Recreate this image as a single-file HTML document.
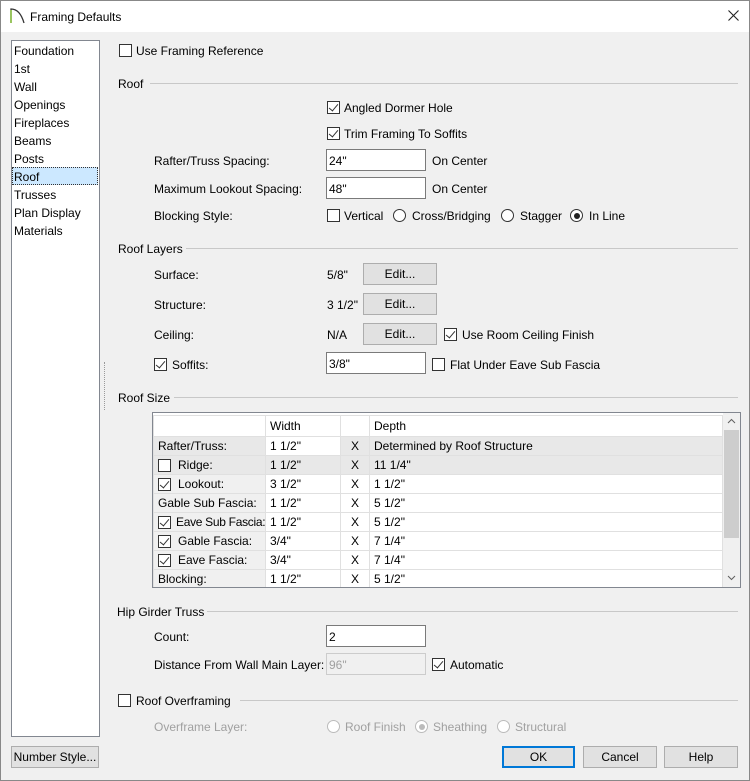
<!DOCTYPE html>
<html><head><style>
*{margin:0;padding:0;box-sizing:border-box}
body{width:750px;height:781px;background:#f0f0f0;font:12px "Liberation Sans",sans-serif;color:#000;position:relative;overflow:hidden}
.a{position:absolute;white-space:nowrap;line-height:16px;margin-top:1px}
.cb{position:absolute;width:13px;height:13px;border:1px solid #333;background:#fff}
.cb.on::after{content:"";position:absolute;left:3px;top:0px;width:4px;height:8px;border:solid #333;border-width:0 1.5px 1.5px 0;transform:rotate(40deg)}
.rd{position:absolute;width:13px;height:13px;border:1px solid #333;border-radius:50%;background:#fff}
.rd.on::after{content:"";position:absolute;left:2.5px;top:2.5px;width:6px;height:6px;border-radius:50%;background:#222}
.rd.dis{border-color:#bbb}.rd.dis.on::after{background:#bbb}
.in{position:absolute;width:100px;height:22px;background:#fff;border:1px solid #7a7a7a;padding:4px 2px 2px;line-height:14px}
.bt{position:absolute;height:22px;background:#e1e1e1;border:1px solid #adadad;text-align:center;line-height:21px}
.ln{position:absolute;height:1px;background:#c8c8c8;right:12px}
.g{color:#a0a0a0}
table{border-collapse:collapse;position:absolute;left:153px;top:415px;width:570px;table-layout:fixed}
td{height:19px;border:1px solid #e0e0e0;padding:1px 4px 0;white-space:nowrap;line-height:17px;position:relative;overflow:hidden}
tr.h td{height:21px;background:#fff}
td.l{background:#f0f0f0}
tr.gr td{background:#e8e8e8}
td.w{background:#fff!important}
td.x{text-align:center}
</style></head><body>
<div style="position:absolute;left:0;top:0;width:750px;height:32px;background:#fff"></div>
<svg style="position:absolute;left:8px;top:6px" width="18" height="18"><path d="M3 17 V3 Q12 3 16 17" fill="none" stroke="#333" stroke-width="1.3"/><path d="M3 17 V4" stroke="#8cc63f" stroke-width="1.5"/></svg>
<div class="a" style="left:30px;top:8px">Framing Defaults</div>
<svg style="position:absolute;left:728px;top:10px" width="11" height="11"><path d="M0.5 0.5 L10.5 10.5 M10.5 0.5 L0.5 10.5" stroke="#222" stroke-width="1.1"/></svg>
<div style="position:absolute;left:0;top:0;width:750px;height:781px;border:1px solid #888;pointer-events:none"></div>

<div style="position:absolute;left:11px;top:40px;width:89px;height:697px;background:#fff;border:1px solid #828790"></div>
<div style="position:absolute;left:12px;top:167px;width:86px;height:18px;background:#cce8ff;border:1px dotted #333"></div>
<div class="a" style="left:14px;top:42px">Foundation</div>
<div class="a" style="left:14px;top:60px">1st</div>
<div class="a" style="left:14px;top:78px">Wall</div>
<div class="a" style="left:14px;top:96px">Openings</div>
<div class="a" style="left:14px;top:114px">Fireplaces</div>
<div class="a" style="left:14px;top:132px">Beams</div>
<div class="a" style="left:14px;top:150px">Posts</div>
<div class="a" style="left:14px;top:168px">Roof</div>
<div class="a" style="left:14px;top:186px">Trusses</div>
<div class="a" style="left:14px;top:204px">Plan Display</div>
<div class="a" style="left:14px;top:222px">Materials</div>
<div style="position:absolute;left:104px;top:362px;width:1px;height:48px;border-left:1px dotted #999"></div>

<div class="cb" style="left:119px;top:44px"></div><div class="a" style="left:136px;top:42px">Use Framing Reference</div>
<div class="ln" style="left:150px;top:83px"></div><div class="a" style="left:118px;top:75px">Roof</div>
<div class="cb on" style="left:327px;top:101px"></div><div class="a" style="left:344px;top:99px">Angled Dormer Hole</div>
<div class="cb on" style="left:327px;top:127px"></div><div class="a" style="left:344px;top:125px">Trim Framing To Soffits</div>
<div class="a" style="left:154px;top:152px">Rafter/Truss Spacing:</div><div class="in" style="left:326px;top:149px">24"</div><div class="a" style="left:432px;top:152px">On Center</div>
<div class="a" style="left:154px;top:180px">Maximum Lookout Spacing:</div><div class="in" style="left:326px;top:177px">48"</div><div class="a" style="left:432px;top:180px">On Center</div>
<div class="a" style="left:154px;top:207px">Blocking Style:</div>
<div class="cb" style="left:327px;top:209px"></div><div class="a" style="left:344px;top:207px">Vertical</div>
<div class="rd" style="left:393px;top:209px"></div><div class="a" style="left:412px;top:207px">Cross/Bridging</div>
<div class="rd" style="left:501px;top:209px"></div><div class="a" style="left:520px;top:207px">Stagger</div>
<div class="rd on" style="left:570px;top:209px"></div><div class="a" style="left:589px;top:207px">In Line</div>

<div class="ln" style="left:186px;top:248px"></div><div class="a" style="left:118px;top:240px">Roof Layers</div>
<div class="a" style="left:154px;top:266px">Surface:</div><div class="a" style="left:327px;top:266px">5/8"</div><div class="bt" style="left:363px;top:263px;width:74px">Edit...</div>
<div class="a" style="left:154px;top:296px">Structure:</div><div class="a" style="left:327px;top:296px">3 1/2"</div><div class="bt" style="left:363px;top:293px;width:74px">Edit...</div>
<div class="a" style="left:154px;top:326px">Ceiling:</div><div class="a" style="left:327px;top:326px">N/A</div><div class="bt" style="left:363px;top:323px;width:74px">Edit...</div>
<div class="cb on" style="left:444px;top:328px"></div><div class="a" style="left:462px;top:326px">Use Room Ceiling Finish</div>
<div class="cb on" style="left:154px;top:358px"></div><div class="a" style="left:172px;top:356px">Soffits:</div>
<div class="in" style="left:326px;top:352px">3/8"</div>
<div class="cb" style="left:432px;top:358px"></div><div class="a" style="left:450px;top:356px">Flat Under Eave Sub Fascia</div>

<div class="ln" style="left:174px;top:397px"></div><div class="a" style="left:118px;top:389px">Roof Size</div>
<div style="position:absolute;left:152px;top:412px;width:589px;height:176px;background:#fff;border:1px solid #828790;overflow:hidden">
</div>
<div style="position:absolute;left:153px;top:413px;width:570px;height:174px;overflow:hidden">
<table style="left:0;top:2px">
<colgroup><col style="width:112px"><col style="width:75px"><col style="width:29px"><col></colgroup>
<tr class="h"><td style="background:#fff"></td><td>Width</td><td></td><td>Depth</td></tr>
<tr class="gr"><td class="l" style="background:#e8e8e8">Rafter/Truss:</td><td class="w">1 1/2"</td><td class="x">X</td><td>Determined by Roof Structure</td></tr>
<tr class="gr"><td style="padding-left:24px"><span class="cb" style="left:4px;top:3px"></span>Ridge:</td><td>1 1/2"</td><td class="x">X</td><td>11 1/4"</td></tr>
<tr><td class="l" style="padding-left:24px"><span class="cb on" style="left:4px;top:3px"></span>Lookout:</td><td>3 1/2"</td><td class="x">X</td><td>1 1/2"</td></tr>
<tr><td class="l">Gable Sub Fascia:</td><td>1 1/2"</td><td class="x">X</td><td>5 1/2"</td></tr>
<tr><td class="l" style="padding-left:22px;letter-spacing:-0.3px"><span class="cb on" style="left:4px;top:3px"></span>Eave Sub Fascia:</td><td>1 1/2"</td><td class="x">X</td><td>5 1/2"</td></tr>
<tr><td class="l" style="padding-left:24px"><span class="cb on" style="left:4px;top:3px"></span>Gable Fascia:</td><td>3/4"</td><td class="x">X</td><td>7 1/4"</td></tr>
<tr><td class="l" style="padding-left:24px"><span class="cb on" style="left:4px;top:3px"></span>Eave Fascia:</td><td>3/4"</td><td class="x">X</td><td>7 1/4"</td></tr>
<tr><td class="l">Blocking:</td><td>1 1/2"</td><td class="x">X</td><td>5 1/2"</td></tr>
</table></div>
<div style="position:absolute;left:723px;top:413px;width:17px;height:174px;background:#f0f0f0"></div>
<div style="position:absolute;left:724px;top:430px;width:15px;height:108px;background:#cdcdcd"></div>
<svg style="position:absolute;left:727px;top:418px" width="9" height="6"><path d="M1 5 L4.5 1.5 L8 5" fill="none" stroke="#606060"/></svg>
<svg style="position:absolute;left:727px;top:575px" width="9" height="6"><path d="M1 1 L4.5 4.5 L8 1" fill="none" stroke="#606060"/></svg>

<div class="ln" style="left:207px;top:611px"></div><div class="a" style="left:117px;top:603px">Hip Girder Truss</div>
<div class="a" style="left:154px;top:628px">Count:</div><div class="in" style="left:326px;top:625px">2</div>
<div class="a" style="left:154px;top:656px">Distance From Wall Main Layer:</div><div class="in g" style="left:326px;top:653px;background:#f0f0f0;border-color:#ccc">96"</div>
<div class="cb on" style="left:432px;top:658px"></div><div class="a" style="left:450px;top:656px">Automatic</div>

<div class="cb" style="left:118px;top:694px"></div><div class="a" style="left:136px;top:692px">Roof Overframing</div><div class="ln" style="left:240px;top:700px"></div>
<div class="a g" style="left:154px;top:718px">Overframe Layer:</div>
<div class="rd dis" style="left:327px;top:720px"></div><div class="a g" style="left:345px;top:718px">Roof Finish</div>
<div class="rd dis on" style="left:415px;top:720px"></div><div class="a g" style="left:433px;top:718px">Sheathing</div>
<div class="rd dis" style="left:497px;top:720px"></div><div class="a g" style="left:515px;top:718px">Structural</div>

<div class="bt" style="left:11px;top:746px;width:88px">Number Style...</div>
<div class="bt" style="left:502px;top:746px;width:73px;border:2px solid #0078d7;line-height:19px">OK</div>
<div class="bt" style="left:583px;top:746px;width:74px">Cancel</div>
<div class="bt" style="left:664px;top:746px;width:74px">Help</div>
</body></html>
